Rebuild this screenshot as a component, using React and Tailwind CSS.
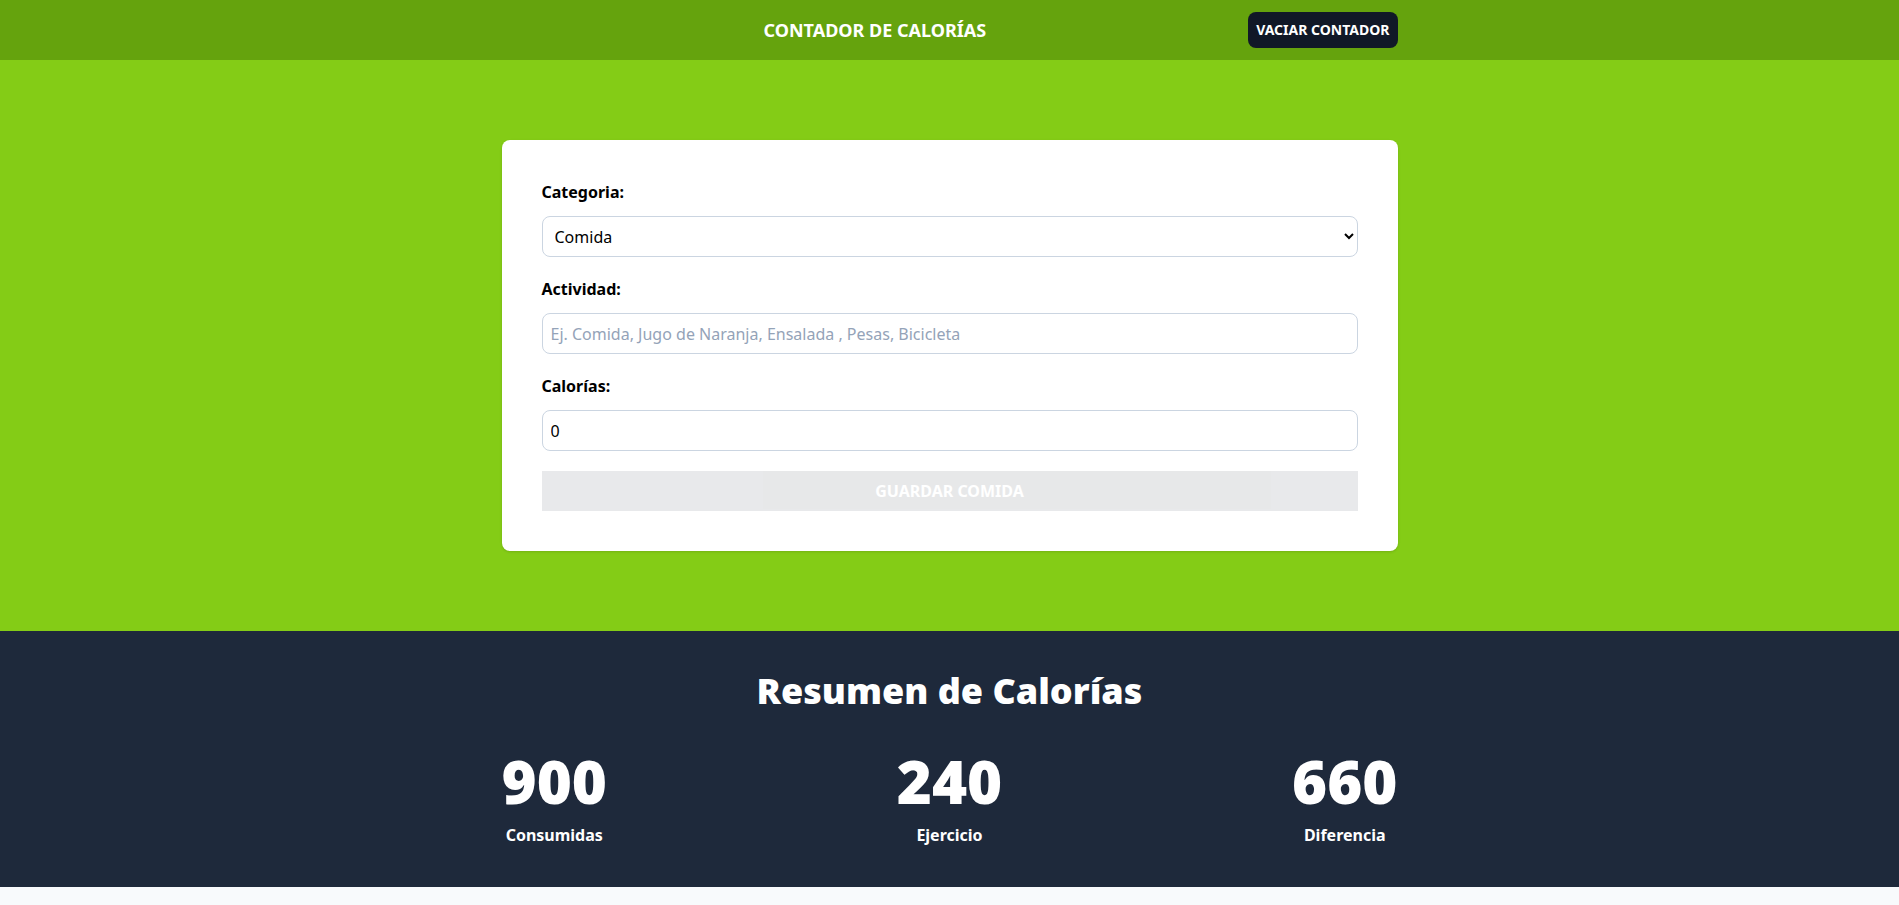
import { useState } from "react";

const categories = [
    { id: 1, name: "Comida" },
    { id: 2, name: "Ejercicio" },
];

export default function App() {
    const [category, setCategory] = useState(1);
    const [name, setName] = useState("");
    const [calories, setCalories] = useState(0);

    const consumed = 900;
    const burned = 240;

    const isValid = name.trim() !== "" && calories > 0;

    return (
        <div className="min-h-screen bg-[#f8fafc]" style={{ fontFamily: '"Noto Sans", "Open Sans", sans-serif' }}>
            <header className="bg-[#65a30d] py-3">
                <div className="max-w-4xl mx-auto flex justify-between items-center">
                    <h1 className="flex-1 text-center text-lg font-bold text-white uppercase">
                        Contador de Calorías
                    </h1>
                    <button className="bg-[#111827] text-white font-bold uppercase text-sm px-2 py-2 rounded-lg">
                        Vaciar Contador
                    </button>
                </div>
            </header>

            <section className="bg-[#84cc16] py-20 px-5">
                <div className="max-w-4xl mx-auto">
                    <form className="space-y-5 bg-white shadow p-10 rounded-lg" onSubmit={(e) => e.preventDefault()}>
                        <div className="grid grid-cols-1 gap-3">
                            <label htmlFor="category" className="font-bold text-black">Categoria:</label>
                            <select
                                id="category"
                                value={category}
                                onChange={(e) => setCategory(+e.target.value)}
                                className="border border-[#cbd5e1] px-2 py-[7.5px] rounded-lg w-full bg-white text-black"
                            >
                                {categories.map(c => (
                                    <option key={c.id} value={c.id}>{c.name}</option>
                                ))}
                            </select>
                        </div>

                        <div className="grid grid-cols-1 gap-3">
                            <label htmlFor="name" className="font-bold text-black">Actividad:</label>
                            <input
                                id="name"
                                type="text"
                                value={name}
                                onChange={(e) => setName(e.target.value)}
                                className="border border-[#cbd5e1] px-2 py-[7.5px] rounded-lg placeholder:text-[#94a3b8]"
                                placeholder="Ej. Comida, Jugo de Naranja, Ensalada , Pesas, Bicicleta"
                            />
                        </div>

                        <div className="grid grid-cols-1 gap-3">
                            <label htmlFor="calories" className="font-bold text-black">Calorías:</label>
                            <input
                                id="calories"
                                type="number"
                                value={calories}
                                onChange={(e) => setCalories(+e.target.value)}
                                className="border border-[#cbd5e1] px-2 py-[7.5px] rounded-lg"
                                placeholder="Calorías. ej. 300 o 500"
                            />
                        </div>

                        <input
                            type="submit"
                            disabled={!isValid}
                            className="bg-[#1f2937] hover:bg-[#111827] w-full p-2 font-bold uppercase text-white cursor-pointer disabled:opacity-10"
                            value={category === 1 ? "Guardar Comida" : "Guardar Ejercicio"}
                        />
                    </form>
                </div>
            </section>

            <section className="bg-[#1e293b] py-10">
                <div className="max-w-4xl mx-auto">
                    <h2 className="text-4xl font-black text-white text-center">Resumen de Calorías</h2>
                    <div className="flex flex-col items-center md:flex-row md:justify-between gap-5 mt-10">
                        {[
                            { value: consumed, label: "Consumidas" },
                            { value: burned, label: "Ejercicio" },
                            { value: consumed - burned, label: "Diferencia" },
                        ].map(item => (
                            <p key={item.label} className="text-white font-bold rounded-full grid grid-cols-1 gap-3 text-center">
                                <span className="font-black text-6xl">{item.value}</span>
                                {item.label}
                            </p>
                        ))}
                    </div>
                </div>
            </section>
        </div>
    );
}
